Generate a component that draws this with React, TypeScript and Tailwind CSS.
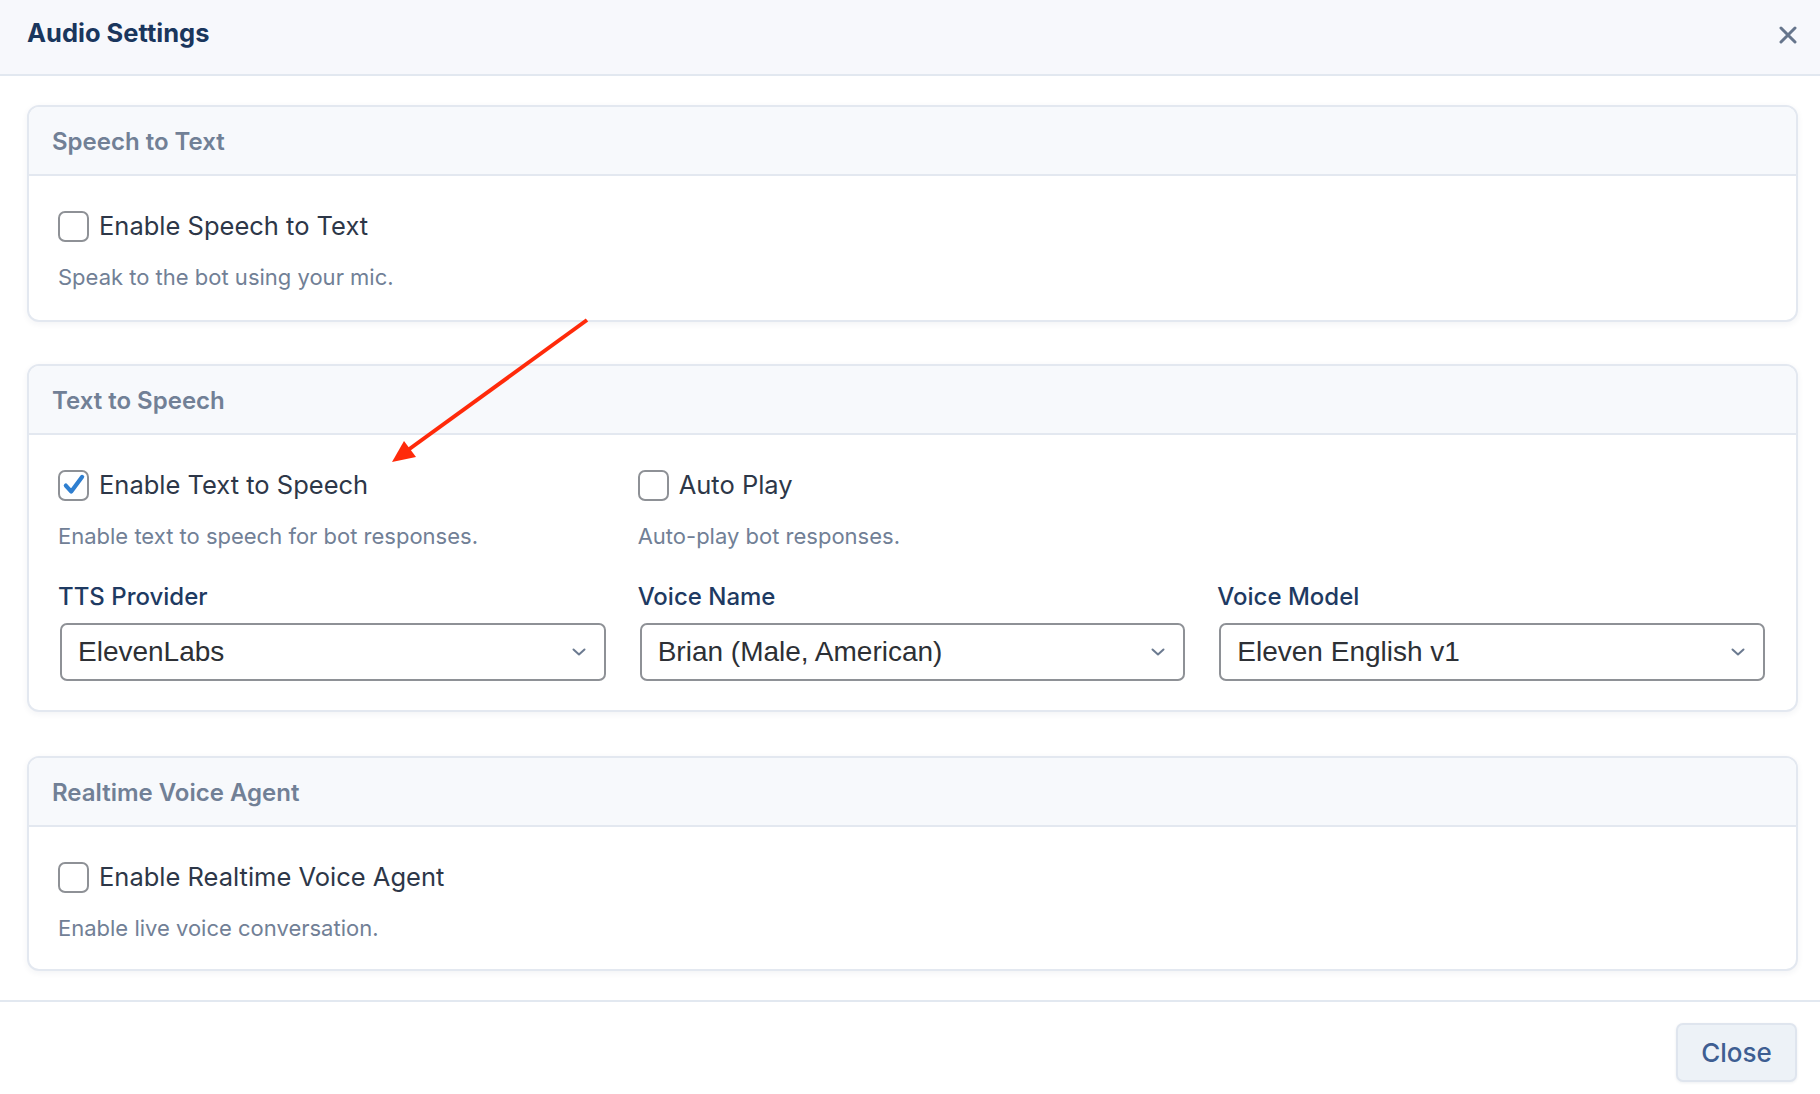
import { useState } from 'react';

const font = { fontFamily: 'Inter, "Noto Sans", sans-serif' };

function Checkbox({ checked }: { checked?: boolean }) {
  return (
    <span className="flex h-[31px] w-[31px] shrink-0 items-center justify-center rounded-[7px] border-2 border-[#8e9196] bg-white">
      {checked && (
        <svg width="24" height="24" viewBox="0 0 22 22">
          <path d="M3.5 11.5 L8.5 17 L18.5 3.5" fill="none" stroke="#2f7fd0" strokeWidth="3.8" strokeLinecap="round" strokeLinejoin="round" />
        </svg>
      )}
    </span>
  );
}

function CheckRow({ label, hint, checked }: { label: string; hint: string; checked?: boolean }) {
  return (
    <div>
      <label className="flex h-[36px] items-center gap-[10px]">
        <Checkbox checked={checked} />
        <span className="text-[25.5px] text-[#2d3748]">{label}</span>
      </label>
      <p className="mt-[18px] h-[30px] text-[22px] leading-[30px] text-[#718096]">{hint}</p>
    </div>
  );
}

function Select({ label, value }: { label: string; value: string }) {
  return (
    <div>
      <div className="h-[32px] text-[24px] font-medium leading-[32px] text-[#1e3a62]">{label}</div>
      <div className="ml-[2px] mt-[10px] flex h-[58px] items-center justify-between rounded-[7px] border-2 border-[#8e9196] bg-white pl-[16px] pr-[18px]">
        <span className="text-[28px] text-[#2d3035]" style={{ fontFamily: '"Liberation Sans", Arial, sans-serif' }}>
          {value}
        </span>
        <svg width="14" height="8" viewBox="0 0 14 8">
          <path d="M1.5 1.5 L7 6.5 L12.5 1.5" fill="none" stroke="#6b7a90" strokeWidth="2" strokeLinecap="round" strokeLinejoin="round" />
        </svg>
      </div>
    </div>
  );
}

function Card({ title, pb, children }: { title: string; pb: string; children: React.ReactNode }) {
  return (
    <section className="overflow-hidden rounded-[12px] border-2 border-[#e3e8f0] bg-white shadow-[0_2px_6px_rgba(30,50,90,0.06)]">
      <div className="flex h-[69px] items-center border-b-2 border-[#e3e8f0] bg-[#f7f9fc] px-[23px] pt-[3px]">
        <h3 className="text-[24px] font-semibold text-[#718096]">{title}</h3>
      </div>
      <div className={`pl-[29px] pr-[31px] pt-[32px] ${pb}`}>{children}</div>
    </section>
  );
}

export default function App() {
  const [open] = useState(true);
  if (!open) return null;

  return (
    <div className="relative flex h-[1094px] w-[1820px] flex-col overflow-hidden bg-white" style={font}>
      {/* Header */}
      <header className="flex h-[76px] shrink-0 items-center justify-between border-b-2 border-[#e2e8f0] bg-[#f7f8fc] pl-[27px] pr-[20px]">
        <h2 className="-mt-[8px] text-[25.5px] font-bold text-[#1a365d]">Audio Settings</h2>
        <button className="-mt-[4px] flex h-[24px] w-[24px] items-center justify-center">
          <svg width="18" height="18" viewBox="0 0 18 18">
            <path d="M2 2 L16 16 M16 2 L2 16" stroke="#66758c" strokeWidth="3" strokeLinecap="round" />
          </svg>
        </button>
      </header>

      {/* Body */}
      <main className="flex flex-col pb-[29px] pl-[27px] pr-[22px] pt-[29px]">
        <Card title="Speech to Text" pb="pb-[28px]">
          <CheckRow label="Enable Speech to Text" hint="Speak to the bot using your mic." />
        </Card>

        <div className="mt-[42px]">
          <Card title="Text to Speech" pb="pb-[29px]">
            <div className="grid grid-cols-3 gap-x-[32px]">
              <CheckRow label="Enable Text to Speech" hint="Enable text to speech for bot responses." checked />
              <CheckRow label="Auto Play" hint="Auto-play bot responses." />
            </div>
            <div className="mt-[30px] grid grid-cols-3 gap-x-[32px]">
              <Select label="TTS Provider" value="ElevenLabs" />
              <Select label="Voice Name" value="Brian (Male, American)" />
              <Select label="Voice Model" value="Eleven English v1" />
            </div>
          </Card>
        </div>

        <div className="mt-[44px]">
          <Card title="Realtime Voice Agent" pb="pb-[26px]">
            <CheckRow label="Enable Realtime Voice Agent" hint="Enable live voice conversation." />
          </Card>
        </div>
      </main>

      {/* Footer */}
      <footer className="flex justify-end border-t-2 border-[#e2e8f0] pr-[23px] pt-[21px]">
        <button className="h-[59px] w-[121px] rounded-[7px] border-2 border-[#dfe5ee] bg-[#edf2f7] text-[26px] font-medium text-[#3e5e92] shadow-[0_1px_3px_rgba(30,50,90,0.08)]">
          Close
        </button>
      </footer>

      {/* Annotation arrow */}
      <svg className="pointer-events-none absolute left-0 top-0" width="1820" height="1094">
        <line x1="587" y1="320" x2="408" y2="450" stroke="#ff2a0a" strokeWidth="4" />
        <polygon points="392,462 416,457 404,441" fill="#ff2a0a" />
      </svg>
    </div>
  );
}
